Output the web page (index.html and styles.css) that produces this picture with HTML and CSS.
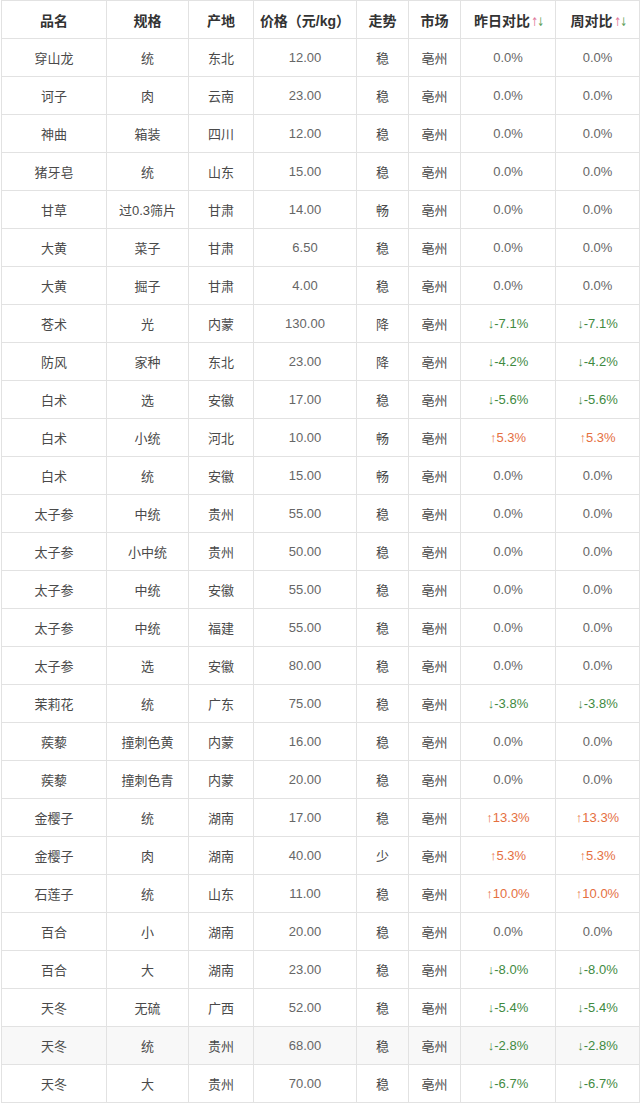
FILE: index.html
```html
<!DOCTYPE html>
<html lang="zh">
<head>
<meta charset="utf-8">
<title>价格表</title>
<link rel="stylesheet" href="styles.css">
</head>
<body>
<div class="wrap">
<table class="price">
<colgroup>
<col class="c1"><col class="c2"><col class="c3"><col class="c4"><col class="c5"><col class="c6"><col class="c7"><col class="c8">
</colgroup>
<thead>
<tr><th>品名</th><th>规格</th><th>产地</th><th>价格（元/kg）</th><th>走势</th><th>市场</th><th>昨日对比<span class="au">↑</span><span class="ad">↓</span></th><th>周对比<span class="au">↑</span><span class="ad">↓</span></th></tr>
</thead>
<tbody>
<tr><td>穿山龙</td><td>统</td><td>东北</td><td class="n">12.00</td><td>稳</td><td>亳州</td><td class="n">0.0%</td><td class="n">0.0%</td></tr>
<tr><td>诃子</td><td>肉</td><td>云南</td><td class="n">23.00</td><td>稳</td><td>亳州</td><td class="n">0.0%</td><td class="n">0.0%</td></tr>
<tr><td>神曲</td><td>箱装</td><td>四川</td><td class="n">12.00</td><td>稳</td><td>亳州</td><td class="n">0.0%</td><td class="n">0.0%</td></tr>
<tr><td>猪牙皂</td><td>统</td><td>山东</td><td class="n">15.00</td><td>稳</td><td>亳州</td><td class="n">0.0%</td><td class="n">0.0%</td></tr>
<tr><td>甘草</td><td>过0.3筛片</td><td>甘肃</td><td class="n">14.00</td><td>畅</td><td>亳州</td><td class="n">0.0%</td><td class="n">0.0%</td></tr>
<tr><td>大黄</td><td>菜子</td><td>甘肃</td><td class="n">6.50</td><td>稳</td><td>亳州</td><td class="n">0.0%</td><td class="n">0.0%</td></tr>
<tr><td>大黄</td><td>掘子</td><td>甘肃</td><td class="n">4.00</td><td>稳</td><td>亳州</td><td class="n">0.0%</td><td class="n">0.0%</td></tr>
<tr><td>苍术</td><td>光</td><td>内蒙</td><td class="n">130.00</td><td>降</td><td>亳州</td><td class="n dn">↓-7.1%</td><td class="n dn">↓-7.1%</td></tr>
<tr><td>防风</td><td>家种</td><td>东北</td><td class="n">23.00</td><td>降</td><td>亳州</td><td class="n dn">↓-4.2%</td><td class="n dn">↓-4.2%</td></tr>
<tr><td>白术</td><td>选</td><td>安徽</td><td class="n">17.00</td><td>稳</td><td>亳州</td><td class="n dn">↓-5.6%</td><td class="n dn">↓-5.6%</td></tr>
<tr><td>白术</td><td>小统</td><td>河北</td><td class="n">10.00</td><td>畅</td><td>亳州</td><td class="n up">↑5.3%</td><td class="n up">↑5.3%</td></tr>
<tr><td>白术</td><td>统</td><td>安徽</td><td class="n">15.00</td><td>畅</td><td>亳州</td><td class="n">0.0%</td><td class="n">0.0%</td></tr>
<tr><td>太子参</td><td>中统</td><td>贵州</td><td class="n">55.00</td><td>稳</td><td>亳州</td><td class="n">0.0%</td><td class="n">0.0%</td></tr>
<tr><td>太子参</td><td>小中统</td><td>贵州</td><td class="n">50.00</td><td>稳</td><td>亳州</td><td class="n">0.0%</td><td class="n">0.0%</td></tr>
<tr><td>太子参</td><td>中统</td><td>安徽</td><td class="n">55.00</td><td>稳</td><td>亳州</td><td class="n">0.0%</td><td class="n">0.0%</td></tr>
<tr><td>太子参</td><td>中统</td><td>福建</td><td class="n">55.00</td><td>稳</td><td>亳州</td><td class="n">0.0%</td><td class="n">0.0%</td></tr>
<tr><td>太子参</td><td>选</td><td>安徽</td><td class="n">80.00</td><td>稳</td><td>亳州</td><td class="n">0.0%</td><td class="n">0.0%</td></tr>
<tr><td>茉莉花</td><td>统</td><td>广东</td><td class="n">75.00</td><td>稳</td><td>亳州</td><td class="n dn">↓-3.8%</td><td class="n dn">↓-3.8%</td></tr>
<tr><td>蒺藜</td><td>撞刺色黄</td><td>内蒙</td><td class="n">16.00</td><td>稳</td><td>亳州</td><td class="n">0.0%</td><td class="n">0.0%</td></tr>
<tr><td>蒺藜</td><td>撞刺色青</td><td>内蒙</td><td class="n">20.00</td><td>稳</td><td>亳州</td><td class="n">0.0%</td><td class="n">0.0%</td></tr>
<tr><td>金樱子</td><td>统</td><td>湖南</td><td class="n">17.00</td><td>稳</td><td>亳州</td><td class="n up">↑13.3%</td><td class="n up">↑13.3%</td></tr>
<tr><td>金樱子</td><td>肉</td><td>湖南</td><td class="n">40.00</td><td>少</td><td>亳州</td><td class="n up">↑5.3%</td><td class="n up">↑5.3%</td></tr>
<tr><td>石莲子</td><td>统</td><td>山东</td><td class="n">11.00</td><td>稳</td><td>亳州</td><td class="n up">↑10.0%</td><td class="n up">↑10.0%</td></tr>
<tr><td>百合</td><td>小</td><td>湖南</td><td class="n">20.00</td><td>稳</td><td>亳州</td><td class="n">0.0%</td><td class="n">0.0%</td></tr>
<tr><td>百合</td><td>大</td><td>湖南</td><td class="n">23.00</td><td>稳</td><td>亳州</td><td class="n dn">↓-8.0%</td><td class="n dn">↓-8.0%</td></tr>
<tr><td>天冬</td><td>无硫</td><td>广西</td><td class="n">52.00</td><td>稳</td><td>亳州</td><td class="n dn">↓-5.4%</td><td class="n dn">↓-5.4%</td></tr>
<tr class="hl"><td>天冬</td><td>统</td><td>贵州</td><td class="n">68.00</td><td>稳</td><td>亳州</td><td class="n dn">↓-2.8%</td><td class="n dn">↓-2.8%</td></tr>
<tr><td>天冬</td><td>大</td><td>贵州</td><td class="n">70.00</td><td>稳</td><td>亳州</td><td class="n dn">↓-6.7%</td><td class="n dn">↓-6.7%</td></tr>
</tbody>
</table>
</div>
</body>
</html>
```
FILE: styles.css
```css
html, body {
  margin: 0;
  padding: 0;
  background: #fff;
}
.wrap {
  padding-left: 1px;
}
.price {
  border-collapse: collapse;
  table-layout: fixed;
  width: 639px;
  font-family: "Liberation Sans", "Noto Sans CJK SC", sans-serif;
  font-size: 13px;
  color: #4a4a4a;
}
.c1 { width: 105px; }
.c2 { width: 82px; }
.c3 { width: 65px; }
.c4 { width: 103px; }
.c5 { width: 52px; }
.c6 { width: 52px; }
.c7 { width: 95px; }
.c8 { width: 84px; }
.price th,
.price td {
  border: 1px solid #e2e2e2;
  height: 37px;
  padding: 0;
  text-align: center;
  vertical-align: middle;
  white-space: nowrap;
  overflow: hidden;
}
.price th {
  font-weight: bold;
  color: #333;
  font-size: 14px;
}
.price td.n {
  color: #666;
}
.price td.dn {
  color: #3f8a3f;
}
.price td.up {
  color: #e5703f;
}
.au,
.ad {
  font-family: "DejaVu Sans", sans-serif;
  font-weight: normal;
  font-size: 12px;
  display: inline-block;
  width: 6px;
  transform: scaleX(0.7);
}
.au {
  color: #e0789a;
}
.ad {
  color: #5aa05a;
}
.hl td {
  background: #f8f8f8;
}
```
